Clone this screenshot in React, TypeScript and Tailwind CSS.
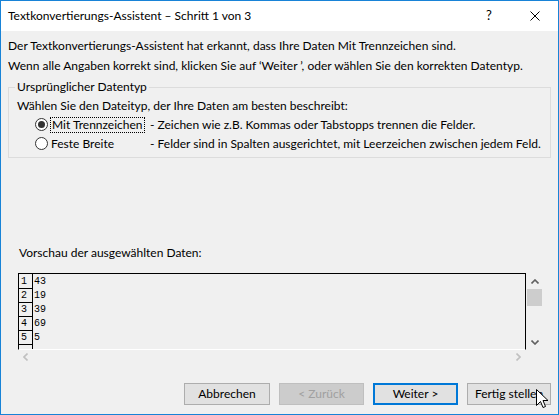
import React from "react";

function Radio({ checked }: { checked: boolean }) {
  return (
    <svg width="13" height="13" viewBox="0 0 13 13" className="shrink-0">
      <circle cx="6.5" cy="6.5" r="6" fill="#ffffff" stroke="#333333" strokeWidth="1" />
      {checked && <circle cx="6.5" cy="6.5" r="3.5" fill="#333333" />}
    </svg>
  );
}

function Cursor() {
  return (
    <svg width="13" height="21" viewBox="0 0 13 21">
      <path
        d="M0.5 0.5 L0.5 16.5 L4.5 12.5 L7 18.5 L9.5 17.5 L7 11.5 L12 11.5 Z"
        fill="#ffffff"
        stroke="#000000"
        strokeWidth="1"
        strokeLinejoin="miter"
      />
    </svg>
  );
}

export default function App() {
  const rows = [
    { n: "1", v: "43" },
    { n: "2", v: "19" },
    { n: "3", v: "39" },
    { n: "4", v: "69" },
    { n: "5", v: "5" },
  ];
  return (
    <div className="w-[559px] h-[415px] border border-[#1883d7] bg-[#f0f0f0] flex flex-col font-['Lato',sans-serif] text-[12px] text-black relative overflow-hidden whitespace-nowrap">
      {/* title bar */}
      <div className="h-[30px] bg-white flex items-center shrink-0">
        <div className="pl-[7px] flex-1 leading-[16px]">
          Textkonvertierungs-Assistent – Schritt 1 von 3
        </div>
        <div className="w-[46px] flex justify-center text-[13px]">?</div>
        <div className="w-[46px] flex justify-center">
          <svg width="10" height="10" viewBox="0 0 10 10">
            <path d="M0.5 0.5 L9.5 9.5 M9.5 0.5 L0.5 9.5" stroke="#000" strokeWidth="1" />
          </svg>
        </div>
      </div>

      {/* body */}
      <div className="flex-1 flex flex-col px-[7px] pt-[5px]">
        <div className="leading-[20px]">
          Der Textkonvertierungs-Assistent hat erkannt, dass Ihre Daten Mit Trennzeichen sind.
        </div>
        <div className="leading-[20px]">
          Wenn alle Angaben korrekt sind, klicken Sie auf ‘Weiter ’, oder wählen Sie den korrekten Datentyp.
        </div>

        <fieldset className="mt-[3px] border border-[#dcdcdc] pl-[8px] pb-[4px] min-w-0">
          <legend className="-ml-[2px] px-[2px] leading-[16px]">Ursprünglicher Datentyp</legend>
          <div className="leading-[18px] mt-[2px]">
            Wählen Sie den Dateityp, der Ihre Daten am besten beschreibt:
          </div>
          <div className="flex items-center h-[19px] pl-[18px]">
            <Radio checked />
            <div className="w-[102px] pl-[3px] flex items-center shrink-0">
              <span className="border border-dotted border-black px-[1px] -ml-[1px] leading-[14px]">
                Mit Trennzeichen
              </span>
            </div>
            <span className="leading-[16px]">- Zeichen wie z.B. Kommas oder Tabstopps trennen die Felder.</span>
          </div>
          <div className="flex items-center h-[19px] pl-[18px]">
            <Radio checked={false} />
            <div className="w-[102px] pl-[3px] leading-[16px] shrink-0">Feste Breite</div>
            <span className="leading-[16px]">- Felder sind in Spalten ausgerichtet, mit Leerzeichen zwischen jedem Feld.</span>
          </div>
        </fieldset>

        <div className="mt-[85px] pl-[11px] leading-[20px]">Vorschau der ausgewählten Daten:</div>

        {/* preview */}
        <div className="mt-[10px] ml-[10px] flex">
          <div className="w-[508px] h-[77px] border-t border-l border-r border-black border-b border-b-white flex overflow-hidden">
            <div className="w-[14px] border-r border-black flex flex-col pt-[1px] shrink-0">
              {rows.map((r) => (
                <div
                  key={r.n}
                  className="h-[14px] border-b border-black font-['Liberation_Mono',monospace] text-[10px] leading-[13px] pl-[2px] shrink-0"
                >
                  {r.n}
                </div>
              ))}
            </div>
            <div className="flex flex-col pt-[1px] font-['Liberation_Mono',monospace] text-[10px] leading-[13px]">
              {rows.map((r) => (
                <div key={r.n} className="h-[14px] pl-[1px]">
                  {r.v}
                </div>
              ))}
            </div>
          </div>
          {/* vertical scrollbar */}
          <div className="w-[17px] h-[77px] flex flex-col items-start">
            <div className="h-[16px] w-full flex items-center justify-center">
              <svg width="8" height="5" viewBox="0 0 8 5">
                <path d="M0.5 4.5 L4 1 L7.5 4.5" stroke="#606060" strokeWidth="1.6" fill="none" />
              </svg>
            </div>
            <div className="w-[15px] h-[17px] bg-[#cdcdcd] ml-[1px]" />
            <div className="flex-1" />
            <div className="h-[16px] w-full flex items-center justify-center">
              <svg width="8" height="5" viewBox="0 0 8 5">
                <path d="M0.5 0.5 L4 4 L7.5 0.5" stroke="#606060" strokeWidth="1.6" fill="none" />
              </svg>
            </div>
          </div>
        </div>
        {/* horizontal scrollbar */}
        <div className="ml-[10px] w-[508px] h-[14px] flex items-center justify-between px-[5px]">
          <svg width="5" height="8" viewBox="0 0 5 8">
            <path d="M4.5 0.5 L1 4 L4.5 7.5" stroke="#c0c0c0" strokeWidth="1.6" fill="none" />
          </svg>
          <svg width="5" height="8" viewBox="0 0 5 8">
            <path d="M0.5 0.5 L4 4 L0.5 7.5" stroke="#c0c0c0" strokeWidth="1.6" fill="none" />
          </svg>
        </div>

        <div className="flex-1" />

        {/* buttons */}
        <div className="flex justify-end gap-[9px] pr-[0px] pb-[9px]">
          <div className="w-[86px] h-[22px] border border-[#adadad] bg-[#e1e1e1] flex items-center justify-center">
            Abbrechen
          </div>
          <div className="w-[85px] h-[22px] border border-[#bfbfbf] bg-[#cccccc] text-[#a0a0a0] flex items-center justify-center">
            &lt; Zurück
          </div>
          <div className="w-[85px] h-[22px] border-2 border-[#0078d7] bg-[#e1e1e1] flex items-center justify-center">
            Weiter &gt;
          </div>
          <div className="w-[84px] h-[22px] border border-[#adadad] bg-[#e1e1e1] flex items-center justify-center">
            Fertig stellen
          </div>
        </div>
      </div>

      <div className="absolute left-[535px] top-[388px]">
        <Cursor />
      </div>
    </div>
  );
}
